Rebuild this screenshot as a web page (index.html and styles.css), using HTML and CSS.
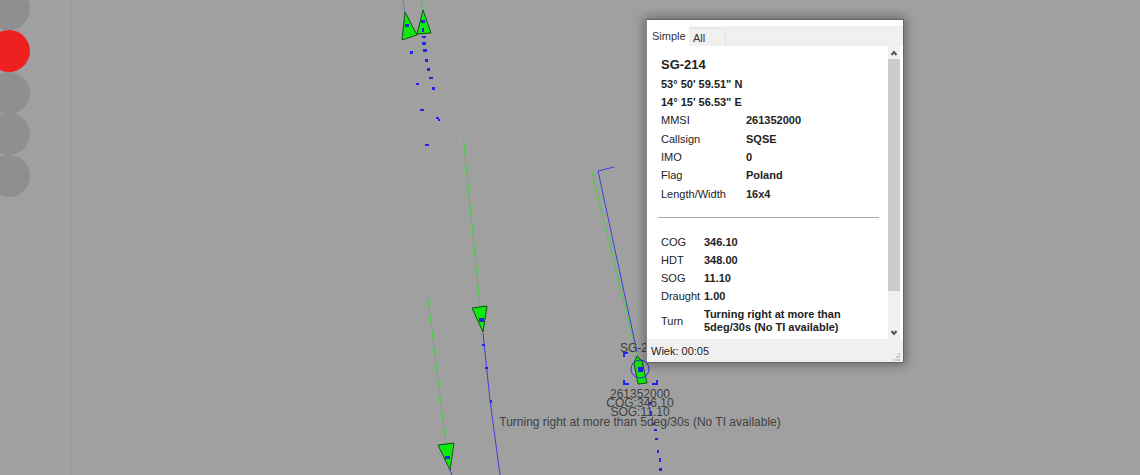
FILE: index.html
```html
<!DOCTYPE html>
<html lang="en">
<head>
<meta charset="utf-8">
<title>Vessel traffic</title>
<link rel="stylesheet" href="styles.css">
</head>
<body>
<main class="chart">
  <svg class="plot" viewBox="0 0 1140 475" preserveAspectRatio="xMinYMin slice" role="img" aria-label="Vessel positions">
    <path class="edge" d="M71.5 0V475"/>
    <g class="lamps">
      <circle cx="9" cy="9" r="21"/>
      <circle cx="9" cy="93" r="21"/>
      <circle cx="9" cy="134" r="21"/>
      <circle cx="9" cy="176" r="21"/>
      <circle class="lamp-on" cx="9" cy="51" r="21"/>
    </g>
    <g class="heading">
      <path d="M421 0L423 14M463.500 139L480 306M427.500 295L446 444M591 168L638 358"/>
    </g>
    <g class="track">
      <path class="faint" d="M403 0L405 14"/>
      <path d="M483 333L490 400L500 475M450 470L452 475M614 167L598 171L637 352"/>
    </g>
    <g class="ship">
      <path d="M405 12L417 35L402 40Z"/>
      <path d="M423 10L431 33L417 34Z"/>
      <path d="M472 308L487 306L483 332Z"/>
      <path d="M438 445L454 443L450 470Z"/>
      <path d="M637 356L642 361L647 383L638 384L634 363Z"/>
    </g>
    <g class="dots">
      <path d="M405 24h4v3h-4zM421 20h4v3h-4zM422 28h2v4h-2zM422 36h4v2h-4zM422 42h4v3h-4zM423 49h4v3h-4zM425 59h3v3h-3zM427 68h3v3h-3zM429 77h4v2h-4zM432 87h3v3h-3zM410 51h3v3h-3zM416 83h3v2h-3zM420 109h4v2h-4zM436 117h3v2h-3zM438 119h2v2h-2zM425 144h4v2h-4z"/>
      <path d="M479 318h5v4h-5zM445 456h5v3h-5zM482 344h3v2h-3zM485 367h3v2h-3zM490 400h2v3h-2zM638 367h5v5h-5z"/>
      <path d="M649 402h2v3h-2zM650 411h2v4h-2zM652 423h3v2h-3zM654 429h3v2h-3zM655 438h3v2h-3zM657 450h2v3h-2zM659 458h2v4h-2zM659 468h3v3h-3z"/>
    </g>
    <circle class="ring" cx="640" cy="369" r="9"/>
    <path class="corners" d="M624 357v-4h4M624 380v4h5M657 380v4h-5"/>
    <g class="label">
      <text x="620" y="352">SG-214</text>
      <text class="mid" x="640" y="398">261352000</text>
      <text class="mid" x="640" y="407">COG:346.10</text>
      <text class="mid" x="640" y="416">SOG:11.10</text>
      <text class="mid" x="640" y="426">Turning right at more than 5deg/30s (No TI available)</text>
    </g>
  </svg>

  <section class="window" aria-label="Vessel details">
    <div class="tabs" role="tablist">
      <button class="tab tab-active" role="tab" aria-selected="true">Simple</button>
      <button class="tab" role="tab" aria-selected="false">All</button>
    </div>
    <div class="body">
      <div class="details">
        <h1 class="name">SG-214</h1>
        <p class="position">53° 50' 59.51" N<br>14° 15' 56.53" E</p>
        <table class="facts identity">
          <tr><th scope="row">MMSI</th><td>261352000</td></tr>
          <tr><th scope="row">Callsign</th><td>SQSE</td></tr>
          <tr><th scope="row">IMO</th><td>0</td></tr>
          <tr><th scope="row">Flag</th><td>Poland</td></tr>
          <tr><th scope="row">Length/Width</th><td>16x4</td></tr>
        </table>
        <hr class="rule">
        <table class="facts motion">
          <tr><th scope="row">COG</th><td>346.10</td></tr>
          <tr><th scope="row">HDT</th><td>348.00</td></tr>
          <tr><th scope="row">SOG</th><td>11.10</td></tr>
          <tr><th scope="row">Draught</th><td>1.00</td></tr>
          <tr class="turn"><th scope="row">Turn</th><td>Turning right at more than<br>5deg/30s (No TI available)</td></tr>
        </table>
      </div>
      <div class="scrollbar">
        <button class="arrow" aria-label="Scroll up"><svg viewBox="0 0 12 12"><path d="M3.500 8L6 5L8.500 8"/></svg></button>
        <div class="thumb"></div>
        <button class="arrow" aria-label="Scroll down"><svg viewBox="0 0 12 12"><path d="M3.500 4L6 7L8.500 4"/></svg></button>
      </div>
    </div>
    <footer class="status">
      <span>Wiek: 00:05</span>
      <svg class="grip" viewBox="0 0 8 8"><path d="M5 0h2v2H5zM3 3h2v2H3zM5 3h2v2H5zM0 6h2v2H0zM3 6h2v2H3zM5 6h2v2H5z"/></svg>
    </footer>
  </section>
</main>
</body>
</html>
```
FILE: styles.css
```css
* { box-sizing: border-box; }

body {
  margin: 0;
  background: #a0a0a0;
  font: 11px/18px "Liberation Sans", Arial, sans-serif;
  color: #222;
}

.chart { position: relative; height: 100vh; overflow: hidden; }

.plot { display: block; width: 100%; height: 100%; }
.edge { stroke: #9a9a9a; }
.lamps { fill: #8f8f8f; }
.lamp-on { fill: #ee2020; }
.heading, .track { fill: none; }
.heading { stroke: #44d044; }
.track { stroke: #4040d8; }
.track .faint { stroke: #6088a8; }
.ship { fill: #10e810; stroke: #15501a; }
.dots { fill: #2424e6; }
.ring { fill: none; stroke: #3030d8; }
.corners { fill: none; stroke: #2424f0; stroke-width: 2; }
.label { font-size: 12px; fill: #404040; }
.mid { text-anchor: middle; }

/* floating details window */
.window {
  position: absolute;
  top: 19px;
  left: 646px;
  width: 258px;
  display: flex;
  flex-direction: column;
  padding-top: 6px;
  background: #fff;
  border: 1px solid #666;
  border-left-color: #888;
  box-shadow: 0 0 10px 2px rgba(0, 0, 0, 0.35);
}

.tabs { display: flex; align-items: flex-end; height: 20px; background: #f0f0f0; }
.tab {
  width: 37px;
  height: 18px;
  padding: 0 4px;
  border: 1px solid #e2e2e2;
  border-width: 1px 1px 0 0;
  background: #f0f0f0;
  font: inherit;
  color: #333;
  text-align: left;
}
.tab-active { width: 42px; height: 20px; padding: 0 5px; border: 0; background: #fff; }

.body { display: flex; height: 293px; padding-right: 3px; }
.details { flex: 1; padding: 9px 9px 0 11px; }
.name { margin: 0; padding-left: 3px; font-size: 13px; line-height: 20px; }
.position { margin: 0; padding-left: 3px; font-weight: bold; }

.facts { width: 100%; border-collapse: collapse; table-layout: fixed; }
.facts th, .facts td { padding: 0; text-align: left; white-space: nowrap; }
.facts th { padding-left: 3px; font-weight: normal; }
.facts td { font-weight: bold; }
.identity { height: 92px; }
.identity th { width: 88px; }
.rule { margin: 14px 0 15px; border: 0; border-top: 1px solid #aaa; }
.motion th { width: 46px; }
.motion .turn { height: 32px; line-height: 13px; }

.scrollbar { display: flex; flex-direction: column; width: 12px; background: #f0f0f0; }
.arrow { width: 12px; height: 13px; padding: 0; border: 0; background: none; }
.arrow:last-child { margin-top: auto; }
.arrow svg { display: block; fill: none; stroke: #555; stroke-width: 2; }
.thumb { height: 232px; background: #cbcbcb; }

.status {
  display: flex;
  align-items: center;
  justify-content: space-between;
  height: 23px;
  padding: 0 2px 0 4px;
  background: #f0f0f0;
}
.grip { align-self: flex-end; width: 8px; height: 10px; fill: #c8c8c8; }
```
